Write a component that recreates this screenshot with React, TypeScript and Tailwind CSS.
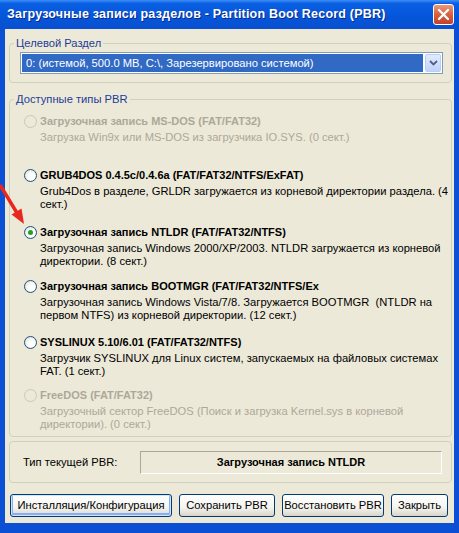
import React from "react";

type Item = {
  title: string;
  lines: string[];
  h: string;
  disabled?: boolean;
  checked?: boolean;
};

const items: Item[] = [
  {
    title: "Загрузочная запись MS-DOS (FAT/FAT32)",
    lines: ["Загрузка Win9x или MS-DOS из загрузчика IO.SYS. (0 сект.)"],
    h: "h-[54px]",
    disabled: true,
  },
  {
    title: "GRUB4DOS 0.4.5c/0.4.6a (FAT/FAT32/NTFS/ExFAT)",
    lines: [
      "Grub4Dos в разделе, GRLDR загружается из корневой директории раздела. (4",
      "сект.)",
    ],
    h: "h-[57px]",
  },
  {
    title: "Загрузочная запись NTLDR (FAT/FAT32/NTFS)",
    lines: [
      "Загрузочная запись Windows 2000/XP/2003. NTLDR загружается из корневой",
      "директории. (8 сект.)",
    ],
    h: "h-[54px]",
    checked: true,
  },
  {
    title: "Загрузочная запись BOOTMGR (FAT/FAT32/NTFS/Ex",
    lines: [
      "Загрузочная запись Windows Vista/7/8. Загружается BOOTMGR  (NTLDR на",
      "первом NTFS) из корневой директории. (12 сект.)",
    ],
    h: "h-[56px]",
  },
  {
    title: "SYSLINUX 5.10/6.01 (FAT/FAT32/NTFS)",
    lines: [
      "Загрузчик SYSLINUX для Linux систем, запускаемых на файловых системах",
      "FAT. (1 сект.)",
    ],
    h: "h-[53px]",
  },
  {
    title: "FreeDOS (FAT/FAT32)",
    lines: [
      "Загрузочный сектор FreeDOS (Поиск и загрузка Kernel.sys в корневой",
      "директории). (0 сект.)",
    ],
    h: "h-[44px]",
    disabled: true,
  },
];

function Radio({ disabled, checked }: { disabled?: boolean; checked?: boolean }) {
  if (disabled) {
    return (
      <span className="w-[13px] h-[13px] rounded-full border border-[#cac8bb] bg-[#ece9d8] shrink-0" />
    );
  }
  return (
    <span className="w-[13px] h-[13px] rounded-full border border-[#1c5180] bg-[radial-gradient(circle_at_60%_60%,#ffffff_30%,#dcd9cc_100%)] shrink-0 flex items-center justify-center">
      {checked && <span className="w-[5px] h-[5px] rounded-full bg-[#21a121]" />}
    </span>
  );
}

function Button({ label, w, primary }: { label: string; w: string; primary?: boolean }) {
  return (
    <div
      className={`${w} h-[23px] shrink-0 whitespace-nowrap rounded-[3px] border border-[#003c74] bg-[linear-gradient(180deg,#ffffff_0%,#f4f4f0_60%,#d8d4c8_100%)] flex items-center justify-center text-[11.2px] text-black ${
        primary ? "shadow-[inset_0_0_0_1px_#cee7ff,inset_0_-1px_0_2px_#89adf0]" : ""
      }`}
    >
      {label}
    </div>
  );
}

export default function App() {
  return (
    <div className="relative w-[459px] h-[533px] bg-[#0b4fd4] flex flex-col font-['Liberation_Sans',Arial,sans-serif] text-black select-none">
      {/* title bar */}
      <div className="h-[29px] shrink-0 flex items-center justify-between pl-[7px] pr-[5px] bg-[linear-gradient(180deg,#3d8ef7_0%,#0a5fe2_12%,#0556da_55%,#0a4fd0_100%)]">
        <span className="text-white font-bold text-[12.5px] tracking-[0.2px] [text-shadow:1px_1px_0_#0a2a8a]">
          Загрузочные записи разделов - Partition Boot Record (PBR)
        </span>
        <div className="w-[21px] h-[21px] rounded-[3px] border border-white bg-[linear-gradient(180deg,#e89a7c_0%,#d8603e_50%,#c4412a_100%)] flex items-center justify-center">
          <svg width="13" height="13" viewBox="0 0 13 13">
            <path d="M2 2 L11 11 M11 2 L2 11" stroke="white" strokeWidth="2.3" strokeLinecap="round" />
          </svg>
        </div>
      </div>

      {/* body */}
      <div className="mx-[5px] mb-[10px] flex-1 min-w-0 bg-[#ece9d8] flex flex-col text-[11.2px]">
        {/* target partition */}
        <fieldset className="min-w-0 mt-[7px] ml-[4px] mr-[2px] border border-[#d0d0bf] rounded-[4px] pl-[4px] pb-[8px]">
          <legend className="px-[2px] leading-[14px] text-[#1e3c96]">Целевой Раздел</legend>
          <div className="mt-[2px] ml-[6px] mr-[8px] h-[22px] border border-[#7f9db9] bg-white flex items-center p-[1px]">
            <div className="flex-1 h-full bg-[#316ac5] text-white flex items-center pl-[4px] whitespace-nowrap">
              0: (истемой, 500.0 MB, C:\, Зарезервировано системой)
            </div>
            <div className="w-[16px] h-full ml-[2px] rounded-[2px] border border-[#b9cdf5] bg-[linear-gradient(180deg,#e2ebfe_0%,#c1d3fb_100%)] flex items-center justify-center">
              <svg width="9" height="6" viewBox="0 0 9 6">
                <path d="M1 1 L4.5 4.5 L8 1" fill="none" stroke="#4d6185" strokeWidth="1.8" />
              </svg>
            </div>
          </div>
        </fieldset>

        {/* PBR types */}
        <fieldset className="min-w-0 mt-[9px] ml-[4px] mr-[2px] border border-[#d0d0bf] rounded-[4px] pl-[4px] pb-[5px]">
          <legend className="px-[2px] leading-[14px] text-[#1e3c96]">Доступные типы PBR</legend>
          <div className="mt-[7px] ml-[10px] flex flex-col">
            {items.map((it) => (
              <div key={it.title} className={`${it.h} flex flex-col`}>
                <div className="h-[16px] flex items-center gap-[3px]">
                  <Radio disabled={it.disabled} checked={it.checked} />
                  <span className={`font-bold text-[11px] whitespace-nowrap ${it.disabled ? "text-[#aca899]" : "text-black"}`}>
                    {it.title}
                  </span>
                </div>
                <div className={`mt-[2px] ml-[16px] leading-[13px] whitespace-pre ${it.disabled ? "text-[#aca899]" : "text-black"}`}>
                  {it.lines.map((l) => (
                    <div key={l}>{l}</div>
                  ))}
                </div>
              </div>
            ))}
          </div>
        </fieldset>

        {/* current type */}
        <div className="mt-[4px] ml-[4px] mr-[2px] h-[42px] border border-[#d0d0bf] rounded-[4px] flex items-center pl-[13px] pr-[9px]">
          <span className="w-[117px]">Тип текущей PBR:</span>
          <div className="flex-1 h-[23px] border border-[#aca899] border-r-white border-b-white flex items-center justify-center font-bold text-[11px]">
            Загрузочная запись NTLDR
          </div>
        </div>

        {/* buttons */}
        <div className="mt-[11px] ml-[5px] flex gap-[7px]">
          <Button label="Инсталляция/Конфигурация" w="w-[162px]" primary />
          <Button label="Сохранить PBR" w="w-[96px]" />
          <Button label="Восстановить PBR" w="w-[102px]" />
          <Button label="Закрыть" w="w-[57px]" />
        </div>
      </div>

      {/* red arrow annotation */}
      <svg className="absolute left-0 top-[180px]" width="30" height="50" viewBox="0 0 30 50">
        <line x1="0" y1="5" x2="17" y2="33" stroke="#e8281c" strokeWidth="3.5" />
        <polygon points="24,44 21.5,28.5 11.5,34.5" fill="#e8281c" />
      </svg>
    </div>
  );
}
